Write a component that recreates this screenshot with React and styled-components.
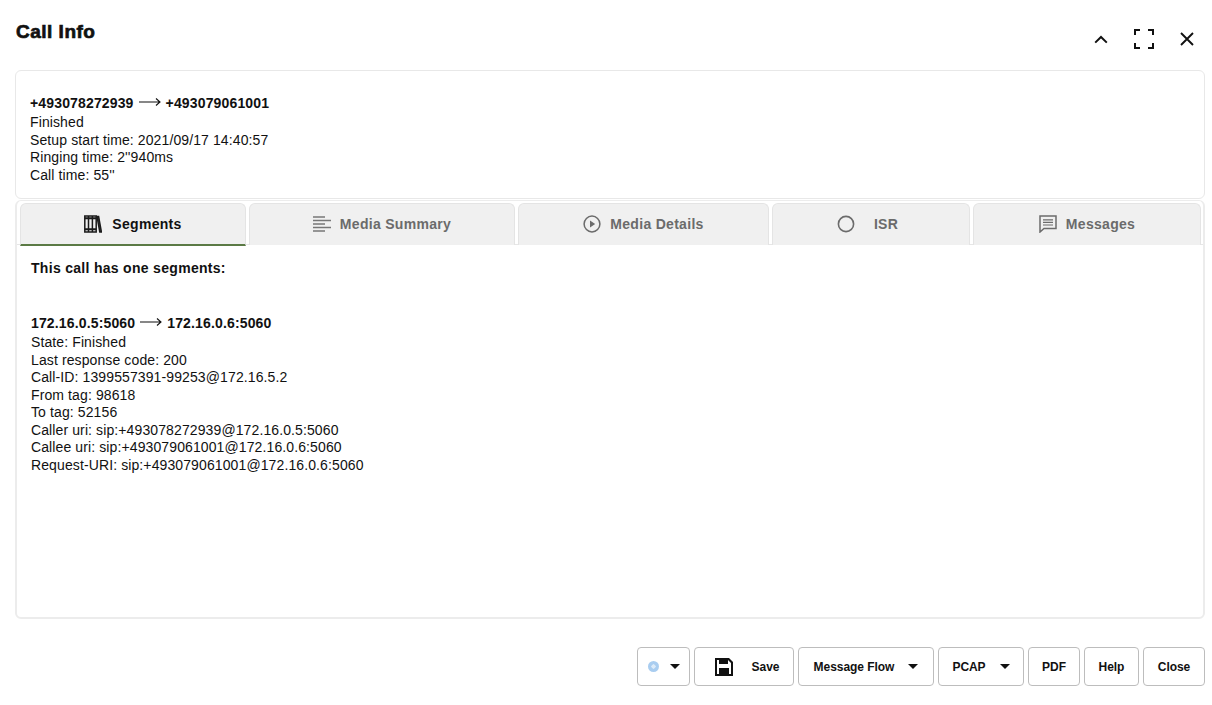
import React from 'react';
import styled, { createGlobalStyle } from 'styled-components';

const GlobalStyle = createGlobalStyle`
  html, body { margin: 0; padding: 0; background: #fff; }
  body { font-family: "Liberation Sans", Arial, sans-serif; color: #111; }
`;

const Page = styled.div`
  width: 1212px;
  height: 705px;
  box-sizing: border-box;
  padding: 0 7px 0 15px;
  display: flex;
  flex-direction: column;
  overflow: hidden;
`;

const Header = styled.header`
  height: 70px;
  display: flex;
  justify-content: space-between;
  align-items: flex-start;
`;

const Title = styled.h1`
  margin: 21px 0 0 1px;
  font-size: 19px;
  line-height: 21px;
  font-weight: 700;
  letter-spacing: 0.5px;
  color: #111;
  -webkit-text-stroke: 0.7px #111;
`;

const WindowControls = styled.div`
  display: flex;
  align-items: center;
  gap: 19px;
  margin: 27px 6px 0 0;
`;

const ControlButton = styled.button`
  width: 24px;
  height: 24px;
  padding: 0;
  border: 0;
  background: none;
  display: flex;
  align-items: center;
  justify-content: center;
`;

const Card = styled.section`
  box-sizing: border-box;
  border: 1px solid #e8e8e8;
  border-radius: 6px;
  height: 129px;
  padding: 24px 14px 0;
  font-size: 14px;
  line-height: 17.5px;
`;

const InfoLine = styled.div`
  font-weight: ${p => (p.$strong ? 700 : 400)};
  height: ${p => (p.$strong ? '19px' : 'auto')};
  letter-spacing: ${p => (p.$strong ? '0.15px' : '0.11px')};
  white-space: pre;
`;

const TabPanel = styled.section`
  box-sizing: border-box;
  margin-top: 1px;
  height: 419px;
  border: 2px solid #ececec;
  border-top-width: 1px;
  border-radius: 6px;
  display: flex;
  flex-direction: column;
`;

const TabStrip = styled.div`
  display: flex;
  gap: 3px;
  padding: 2px 2px 0 3px;
  height: 44px;
  box-sizing: border-box;
  border-bottom: 1px solid #e6e6e6;
`;

const Tab = styled.div`
  box-sizing: border-box;
  width: ${p => p.$width}px;
  height: ${p => (p.$active ? '43px' : '42px')};
  padding-bottom: ${p => (p.$active ? '0' : '1px')};
  padding-right: ${p => p.$inset || 0}px;
  background: #f0f0f0;
  border: 1px solid #e4e4e4;
  border-bottom: ${p => (p.$active ? '2px solid #5b7a45' : '0')};
  border-radius: 6px 6px 0 0;
  display: flex;
  align-items: center;
  justify-content: center;
  gap: ${p => p.$gap || 9}px;
  font-size: 14px;
  font-weight: 700;
  letter-spacing: 0.3px;
  color: ${p => (p.$active ? '#111' : '#6b6b6b')};
`;

const TabBody = styled.div`
  padding: 15px 14px 0;
  font-size: 14px;
  line-height: 17.5px;
`;

const Lead = styled.div`
  font-weight: 700;
  letter-spacing: 0.3px;
  height: 55px;
`;

const Footer = styled.footer`
  display: flex;
  justify-content: flex-end;
  gap: 4px;
  margin-top: 28px;
`;

const ActionButton = styled.button`
  box-sizing: border-box;
  width: ${p => p.$width}px;
  height: 39px;
  padding: 0 0 0 ${p => p.$indent || 0}px;
  background: #fff;
  border: 1px solid #bdbdbd;
  border-radius: 4px;
  display: flex;
  align-items: center;
  justify-content: center;
  gap: ${p => p.$gap || 0}px;
  font-family: "Liberation Sans", Arial, sans-serif;
  font-size: 12px;
  font-weight: 700;
  letter-spacing: -0.05px;
  color: #111;
`;

const Caret = styled.span`
  width: 0;
  height: 0;
  border-left: 5px solid transparent;
  border-right: 5px solid transparent;
  border-top: 5px solid #111;
`;

const StatusDot = styled.span`
  box-sizing: border-box;
  width: 11px;
  height: 11px;
  border-radius: 50%;
  background: radial-gradient(circle, #dcebf9 0 25%, #a9cdf0 30% 100%);
`;

const ArrowGlyph = styled.svg`
  vertical-align: 1px;
  margin: 0 4px;
`;

const Arrow = () => (
  <ArrowGlyph width="24" height="10" viewBox="0 0 24 10">
    <path d="M1 5h21M18 1.5 22 5l-4 3.5" fill="none" stroke="#111" strokeWidth="1.1" />
  </ArrowGlyph>
);

const BooksIcon = () => (
  <svg width="18" height="18" viewBox="0 0 18 18" fill="none" stroke="#1b1b1b">
    <path strokeWidth="1.5" d="M.8 1h11.4v16H.8z" />
    <path strokeWidth="2" d="M.8 3.2h11.4M.8 14.2h11.4" />
    <path strokeWidth="1.5" d="M4.5 1v16M8.4 1v16" />
    <path strokeWidth="1.5" d="M13 1.5h1.6L17.4 17h-1.6z" />
  </svg>
);

const SummaryIcon = () => (
  <svg width="18" height="18" viewBox="0 0 18 18" stroke="#777" strokeWidth="1.6">
    <path d="M0 2h12M0 5.5h18M0 9h12M0 12.5h18M0 16h12" />
  </svg>
);

const PlayIcon = () => (
  <svg width="18" height="18" viewBox="0 0 18 18" fill="none">
    <circle cx="9" cy="9" r="7.9" stroke="#6b6b6b" strokeWidth="1.5" />
    <path d="M7 5.6 12.2 9 7 12.4z" fill="#6b6b6b" />
  </svg>
);

const RingIcon = () => (
  <svg width="18" height="18" viewBox="0 0 18 18" fill="none">
    <circle cx="9" cy="9" r="7.6" stroke="#6b6b6b" strokeWidth="1.6" />
  </svg>
);

const MessageIcon = () => (
  <svg width="18" height="18" viewBox="0 0 18 18" fill="none" stroke="#6b6b6b" strokeWidth="1.5">
    <path d="M1 1h16v12.5H5L1 17z" />
    <path d="M4 4.8h10M4 7.4h10M4 10h10" strokeWidth="1.2" />
  </svg>
);

const SaveIcon = () => (
  <svg width="18" height="18" viewBox="0 0 18 18">
    <path
      fill="#111"
      fillRule="evenodd"
      d="M0 0h14l4 4v14H0zM2 2v14h14V5l-3-3v4H4V2z"
    />
    <path fill="#111" d="M4 10h10v7H4z" />
  </svg>
);

const ChevronUp = () => (
  <svg width="14" height="9" viewBox="0 0 14 9" fill="none" stroke="#111" strokeWidth="2">
    <path d="M1.2 7.6 7 2l5.8 5.6" />
  </svg>
);

const Fullscreen = () => (
  <svg width="20" height="20" viewBox="0 0 20 20" fill="none" stroke="#111" strokeWidth="2">
    <path d="M1 6V1h5M14 1h5v5M19 14v5h-5M6 19H1v-5" />
  </svg>
);

const CloseIcon = () => (
  <svg width="14" height="14" viewBox="0 0 14 14" fill="none" stroke="#111" strokeWidth="1.9">
    <path d="M1 1l12 12M13 1 1 13" />
  </svg>
);

const tabs = [
  { label: 'Segments', width: 226, icon: <BooksIcon />, active: true, gap: 10 },
  { label: 'Media Summary', width: 266, icon: <SummaryIcon /> },
  { label: 'Media Details', width: 251, icon: <PlayIcon /> },
  { label: 'ISR', width: 198, icon: <RingIcon />, gap: 19, inset: 7 },
  { label: 'Messages', width: 228, icon: <MessageIcon /> },
];

const segmentLines = [
  'State: Finished',
  'Last response code: 200',
  'Call-ID: 1399557391-99253@172.16.5.2',
  'From tag: 98618',
  'To tag: 52156',
  'Caller uri: sip:+493078272939@172.16.0.5:5060',
  'Callee uri: sip:+493079061001@172.16.0.6:5060',
  'Request-URI: sip:+493079061001@172.16.0.6:5060',
];

export default function App() {
  return (
    <Page>
      <GlobalStyle />
      <Header>
        <Title>Call Info</Title>
        <WindowControls>
          <ControlButton aria-label="Collapse"><ChevronUp /></ControlButton>
          <ControlButton aria-label="Fullscreen"><Fullscreen /></ControlButton>
          <ControlButton aria-label="Close"><CloseIcon /></ControlButton>
        </WindowControls>
      </Header>

      <Card>
        <InfoLine $strong>+493078272939<Arrow />+493079061001</InfoLine>
        <InfoLine>Finished</InfoLine>
        <InfoLine>Setup start time: 2021/09/17 14:40:57</InfoLine>
        <InfoLine>Ringing time: 2''940ms</InfoLine>
        <InfoLine>Call time: 55''</InfoLine>
      </Card>

      <TabPanel>
        <TabStrip>
          {tabs.map(t => (
            <Tab key={t.label} $width={t.width} $active={t.active} $gap={t.gap} $inset={t.inset}>
              {t.icon}
              <span>{t.label}</span>
            </Tab>
          ))}
        </TabStrip>
        <TabBody>
          <Lead>This call has one segments:</Lead>
          <InfoLine $strong>172.16.0.5:5060<Arrow />172.16.0.6:5060</InfoLine>
          {segmentLines.map(line => <InfoLine key={line}>{line}</InfoLine>)}
        </TabBody>
      </TabPanel>

      <Footer>
        <ActionButton $width={53} $gap={11} aria-label="Status"><StatusDot /><Caret /></ActionButton>
        <ActionButton $width={100} $gap={19} $indent={6}><SaveIcon />Save</ActionButton>
        <ActionButton $width={136} $gap={14}>Message Flow<Caret /></ActionButton>
        <ActionButton $width={86} $gap={14}>PCAP<Caret /></ActionButton>
        <ActionButton $width={52}>PDF</ActionButton>
        <ActionButton $width={55}>Help</ActionButton>
        <ActionButton $width={62}>Close</ActionButton>
      </Footer>
    </Page>
  );
}
